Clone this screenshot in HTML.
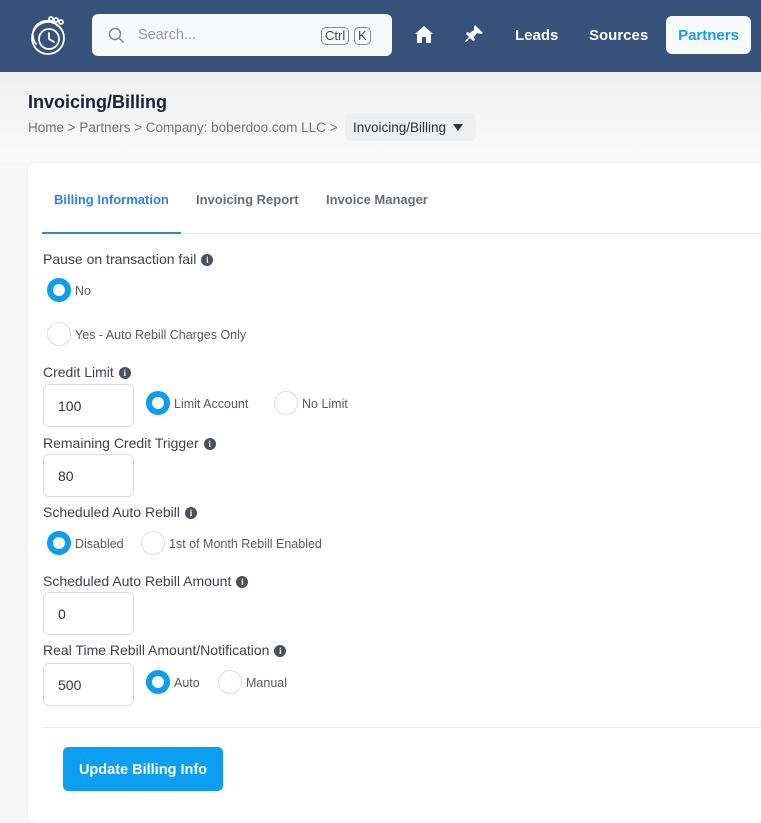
<!DOCTYPE html>
<html><head><meta charset="utf-8"><style>
*{box-sizing:border-box;margin:0;padding:0}
body{width:761px;height:815px;overflow:hidden;background:#f7f7f8;font-family:"Liberation Sans",Arial,sans-serif;position:relative;color:#3a3f4a}
.a{position:absolute;white-space:nowrap}
.hdr{position:absolute;left:0;top:0;width:761px;height:72px;background:#36527a}
.grad{position:absolute;left:0;top:72px;width:761px;height:90px;background:linear-gradient(#f0f0f0,#fafafa)}
.search{position:absolute;left:92px;top:14px;width:300px;height:42px;background:#f8f9fb;border-radius:6px}
.kbd{position:absolute;top:13px;height:18px;border:1px solid #888;border-radius:5px;font-size:13px;color:#444;line-height:16px;padding:0 3px}
.nav{color:#fff;font-weight:bold;font-size:15px;top:27px}
.card{position:absolute;left:28px;top:163px;width:760px;height:660px;background:#fff;border-radius:8px;box-shadow:0 0 3px rgba(0,0,0,.06)}
.lbl{font-size:14px;color:#3d4250;left:43px}
.info{display:inline-block;width:12px;height:12px;border-radius:50%;background:#4a5060;color:#fff;font-size:9px;font-weight:bold;text-align:center;line-height:12px;vertical-align:1px;margin-left:5px;font-family:"Liberation Serif",serif}
.r{position:absolute;width:24px;height:24px;border-radius:50%;border:1px solid #dcdde3;background:#fff}
.r.on{border:6px solid #0d9cf0}
.rl{font-size:12.5px;color:#555a66}
.inp{position:absolute;left:43px;width:91px;height:43px;border:1px solid #dcdde3;border-radius:6px;font-size:14px;color:#333;padding:13px 0 0 14px}
.tab{font-size:13px;font-weight:bold;top:192px}
</style></head><body>
<div class="hdr"></div>
<svg class="a" style="left:28px;top:14px" width="44" height="44" viewBox="0 0 44 44" fill="none" stroke="#fff" stroke-width="1.8" stroke-linecap="round">
<circle cx="20" cy="24" r="16"/><path d="M8 30 A14 14 0 0 1 30 12"/><circle cx="21" cy="25" r="10"/><path d="M21 25 L21 19 M21 25 L26 28"/>
<circle cx="23" cy="5" r="2"/><circle cx="28" cy="6" r="2"/><circle cx="33" cy="8" r="2"/></svg>
<div class="search">
<svg class="a" style="left:16px;top:13px" width="17" height="17" viewBox="0 0 17 17" fill="none" stroke="#888" stroke-width="1.5"><circle cx="7" cy="7" r="5.5"/><path d="M11 11 L15.5 15.5"/></svg>
<span class="a" style="left:46px;top:13px;font-size:14.5px;color:#999">Search...</span>
<span class="kbd" style="left:229px">Ctrl</span><span class="kbd" style="left:262px">K</span>
</div>
<svg class="a" style="left:415px;top:26px" width="18" height="17" viewBox="0 0 18 17" fill="#fff"><path d="M9 0 L18 8 L16 8 L16 17 L11 17 L11 11 L7 11 L7 17 L2 17 L2 8 L0 8 Z"/></svg>
<svg class="a" style="left:465px;top:25px" width="18" height="18" viewBox="0 0 18 18" fill="#fff"><path d="M10 0 L18 8 L16 9 L12 8 L9 12 L10 15 L8 16 L5 13 L1 17 L0 17 L0 16 L4 12 L1 9 L2 7 L5 8 L9 5 L9 2 Z"/></svg>
<span class="a nav" style="left:515px">Leads</span>
<span class="a nav" style="left:589px">Sources</span>
<div class="a" style="left:666px;top:16px;width:85px;height:38px;background:#f8f9fb;border-radius:6px;color:#1a9cf0;font-weight:bold;font-size:15px;text-align:center;line-height:39px">Partners</div>
<div class="grad"></div>
<span class="a" style="left:28px;top:92px;font-size:18px;font-weight:bold;color:#1b1f3b">Invoicing/Billing</span>
<span class="a" style="left:28px;top:120px;font-size:13.5px;color:#6b717c">Home &gt; Partners &gt; Company: boberdoo.com LLC &gt;</span>
<div class="a" style="left:345px;top:113px;width:131px;height:28px;background:#eeeff1;border-radius:5px;font-size:13.5px;color:#2a2f3a;padding:7px 0 0 8px">Invoicing/Billing <span style="display:inline-block;width:0;height:0;border-left:5px solid transparent;border-right:5px solid transparent;border-top:7px solid #333;margin-left:3px;vertical-align:1px"></span></div>
<div class="card"></div>
<span class="a tab" style="left:54px;color:#2f80ed">Billing Information</span>
<span class="a tab" style="left:196px;color:#666c78">Invoicing Report</span>
<span class="a tab" style="left:326px;color:#666c78">Invoice Manager</span>
<div class="a" style="left:42px;top:233px;width:719px;height:1px;background:#e6e7ea"></div>
<div class="a" style="left:42px;top:232px;width:139px;height:2px;background:#2f80ed"></div>

<span class="a lbl" style="top:251px">Pause on transaction fail<span class="info">i</span></span>
<div class="r on" style="left:47px;top:278px"></div><span class="a rl" style="left:75px;top:284px">No</span>
<div class="r" style="left:47px;top:322px"></div><span class="a rl" style="left:75px;top:328px">Yes - Auto Rebill Charges Only</span>

<span class="a lbl" style="top:364px">Credit Limit<span class="info">i</span></span>
<div class="inp" style="top:384px">100</div>
<div class="r on" style="left:146px;top:391px"></div><span class="a rl" style="left:174px;top:397px">Limit Account</span>
<div class="r" style="left:274px;top:391px"></div><span class="a rl" style="left:302px;top:397px">No Limit</span>

<span class="a lbl" style="top:435px">Remaining Credit Trigger<span class="info">i</span></span>
<div class="inp" style="top:454px">80</div>

<span class="a lbl" style="top:504px">Scheduled Auto Rebill<span class="info">i</span></span>
<div class="r on" style="left:47px;top:531px"></div><span class="a rl" style="left:75px;top:537px">Disabled</span>
<div class="r" style="left:141px;top:531px"></div><span class="a rl" style="left:169px;top:537px">1st of Month Rebill Enabled</span>

<span class="a lbl" style="top:573px">Scheduled Auto Rebill Amount<span class="info">i</span></span>
<div class="inp" style="top:592px">0</div>

<span class="a lbl" style="top:642px">Real Time Rebill Amount/Notification<span class="info">i</span></span>
<div class="inp" style="top:663px">500</div>
<div class="r on" style="left:146px;top:670px"></div><span class="a rl" style="left:174px;top:676px">Auto</span>
<div class="r" style="left:218px;top:670px"></div><span class="a rl" style="left:246px;top:676px">Manual</span>

<div class="a" style="left:43px;top:727px;width:718px;height:1px;background:#e6e7ea"></div>
<div class="a" style="left:63px;top:747px;width:160px;height:44px;background:#0b9ff2;border-radius:5px;color:#fff;font-weight:bold;font-size:14.5px;text-align:center;line-height:46px">Update Billing Info</div>
</body></html>
